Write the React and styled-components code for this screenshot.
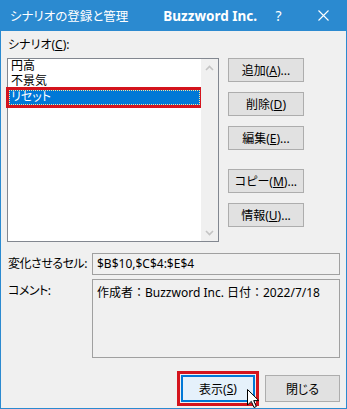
import React from 'react';
import styled, { createGlobalStyle } from 'styled-components';

const Global = createGlobalStyle`
  html, body { margin: 0; padding: 0; background: #f0f0f0; }
  body {
    font-family: "Noto Sans", "Noto Sans CJK JP", sans-serif;
    font-size: 12px;
    color: #000;
    font-feature-settings: "palt";
  }
`;

const Window = styled.div`
  position: relative;
  width: 347px;
  height: 409px;
  box-sizing: border-box;
  border: 1px solid #2b8ad0;
  border-top: none;
  background: #f0f0f0;
  display: flex;
  flex-direction: column;
  overflow: hidden;
`;

const TitleBar = styled.div`
  height: 31px;
  flex: none;
  background: #2b8ad0;
  color: #fff;
  display: flex;
  align-items: center;
`;

const TitleText = styled.div`
  flex: 1;
  padding-left: 9px;
  font-size: 12.5px;
`;

const Company = styled.div`
  font-weight: 700;
  font-size: 13.5px;
`;

const CaptionButton = styled.div`
  width: ${p => p.$w}px;
  height: 31px;
  display: flex;
  align-items: center;
  justify-content: center;
  font-size: 14px;
`;

const Body = styled.div`
  flex: 1;
  display: flex;
  flex-direction: column;
  padding: 6px 6px 0 6px;
`;

const Label = styled.div`
  height: 16px;
  line-height: 16px;
  padding-left: 1px;
  margin-bottom: 5px;
  white-space: nowrap;
`;

const Acc = styled.span`
  text-decoration: underline;
  text-underline-offset: 1px;
`;

const TopSection = styled.div`
  display: flex;
  gap: 9px;
  height: 184px;
`;

const ListBox = styled.div`
  width: 212px;
  box-sizing: border-box;
  border: 1px solid #828790;
  background: #fff;
  display: flex;
`;

const Items = styled.div`
  flex: 1;
  padding: 0 1px;
  display: flex;
  flex-direction: column;
`;

const Item = styled.div`
  height: 15px;
  font-family: "Liberation Sans", "Noto Sans CJK JP", sans-serif;
  line-height: ${p => (p.$selected ? 13 : 15)}px;
  box-sizing: border-box;
  padding-left: ${p => (p.$selected ? 1 : 2)}px;
  border: ${p => (p.$selected ? '1px dotted #f7e4a0' : 'none')};
  background: ${p => (p.$selected ? '#0078d7' : 'transparent')};
  color: ${p => (p.$selected ? '#fff' : '#000')};
  outline: ${p => (p.$selected ? '3px solid #d4141d' : 'none')};
  outline-offset: 0;
  margin-top: ${p => (p.$selected ? '1px' : '0')};
  overflow: hidden;
`;

const ScrollBar = styled.div`
  width: 17px;
  background: #f0f0f0;
  display: flex;
  flex-direction: column;
  justify-content: space-between;
`;

const ScrollArrow = styled.div`
  height: 17px;
  display: flex;
  align-items: center;
  justify-content: center;
`;

const ButtonColumn = styled.div`
  width: 76px;
  display: flex;
  flex-direction: column;
  gap: 10px;
`;

const Button = styled.div`
  box-sizing: border-box;
  width: ${p => p.$w || 76}px;
  height: ${p => p.$h || 24}px;
  margin-top: ${p => p.$mt || 0}px;
  border: 1px solid ${p => (p.$default ? '#0078d7' : '#adadad')};
  box-shadow: ${p => (p.$default ? 'inset 0 0 0 1px #0078d7' : 'none')};
  background: ${p => (p.$default ? '#e5f1fb' : '#e1e1e1')};
  outline: ${p => (p.$default ? '3px solid #d4141d' : 'none')};
  outline-offset: 1px;
  display: flex;
  align-items: center;
  justify-content: center;
  white-space: nowrap;
`;

const FieldRow = styled.div`
  display: grid;
  grid-template-columns: 85px 248px;
  margin-top: ${p => p.$mt}px;
`;

const FieldLabel = styled.div`
  padding-left: 1px;
  padding-top: ${p => p.$pt}px;
  white-space: nowrap;
  line-height: 16px;
  letter-spacing: -0.5px;
`;

const FieldBox = styled.div`
  box-sizing: border-box;
  height: ${p => p.$h}px;
  border: 1px solid #a0a0a0;
  background: #f0f0f0;
  padding: ${p => p.$pad};
  line-height: 16px;
  white-space: nowrap;
  font-feature-settings: normal;
`;

const Footer = styled.div`
  margin-top: 17px;
  display: flex;
  justify-content: flex-end;
  gap: 10px;
`;

const Cursor = styled.svg`
  position: absolute;
  left: 246px;
  top: 389px;
`;

const Chevron = ({ up }) => (
  <svg width="9" height="6" viewBox="0 0 9 6">
    <path
      d={up ? 'M1 5 L4.5 1.5 L8 5' : 'M1 1 L4.5 4.5 L8 1'}
      fill="none"
      stroke="#c4c4c4"
      strokeWidth="1.6"
    />
  </svg>
);

export default function App() {
  return (
    <>
      <Global />
      <Window>
        <TitleBar>
          <TitleText>シナリオの登録と管理</TitleText>
          <Company>Buzzword Inc.</Company>
          <CaptionButton $w={43}>?</CaptionButton>
          <CaptionButton $w={46}>
            <svg width="11" height="11" viewBox="0 0 11 11">
              <path d="M0.5 0.5 L10.5 10.5 M10.5 0.5 L0.5 10.5" stroke="#fff" strokeWidth="1.1" />
            </svg>
          </CaptionButton>
        </TitleBar>
        <Body>
          <Label>
            シナリオ(<Acc>C</Acc>):
          </Label>
          <TopSection>
            <ListBox>
              <Items>
                <Item>円高</Item>
                <Item>不景気</Item>
                <Item $selected>リセット</Item>
              </Items>
              <ScrollBar>
                <ScrollArrow>
                  <Chevron up />
                </ScrollArrow>
                <ScrollArrow>
                  <Chevron />
                </ScrollArrow>
              </ScrollBar>
            </ListBox>
            <ButtonColumn>
              <Button>追加(<Acc>A</Acc>)...</Button>
              <Button>削除(<Acc>D</Acc>)</Button>
              <Button>編集(<Acc>E</Acc>)...</Button>
              <Button $mt={9}>コピー(<Acc>M</Acc>)...</Button>
              <Button>情報(<Acc>U</Acc>)...</Button>
            </ButtonColumn>
          </TopSection>
          <FieldRow $mt={11}>
            <FieldLabel $pt={3}>変化させるセル:</FieldLabel>
            <FieldBox $h={22} $pad="2px 4px">$B$10,$C$4:$E$4</FieldBox>
          </FieldRow>
          <FieldRow $mt={4}>
            <FieldLabel $pt={4}>コメント:</FieldLabel>
            <FieldBox $h={79} $pad="5px 4px">作成者：Buzzword Inc. 日付：2022/7/18</FieldBox>
          </FieldRow>
          <Footer>
            <Button $default $w={74} $h={27}>
              表示(<Acc>S</Acc>)
            </Button>
            <Button $w={75} $h={27}>閉じる</Button>
          </Footer>
        </Body>
        <Cursor width="13" height="20" viewBox="0 0 13 20">
          <path
            d="M0.5 0.5 L0.5 16 L4.3 12.4 L7 18.5 L9.3 17.5 L6.7 11.6 L11.8 11.6 Z"
            fill="#fff"
            stroke="#000"
            strokeWidth="1"
          />
        </Cursor>
      </Window>
    </>
  );
}
